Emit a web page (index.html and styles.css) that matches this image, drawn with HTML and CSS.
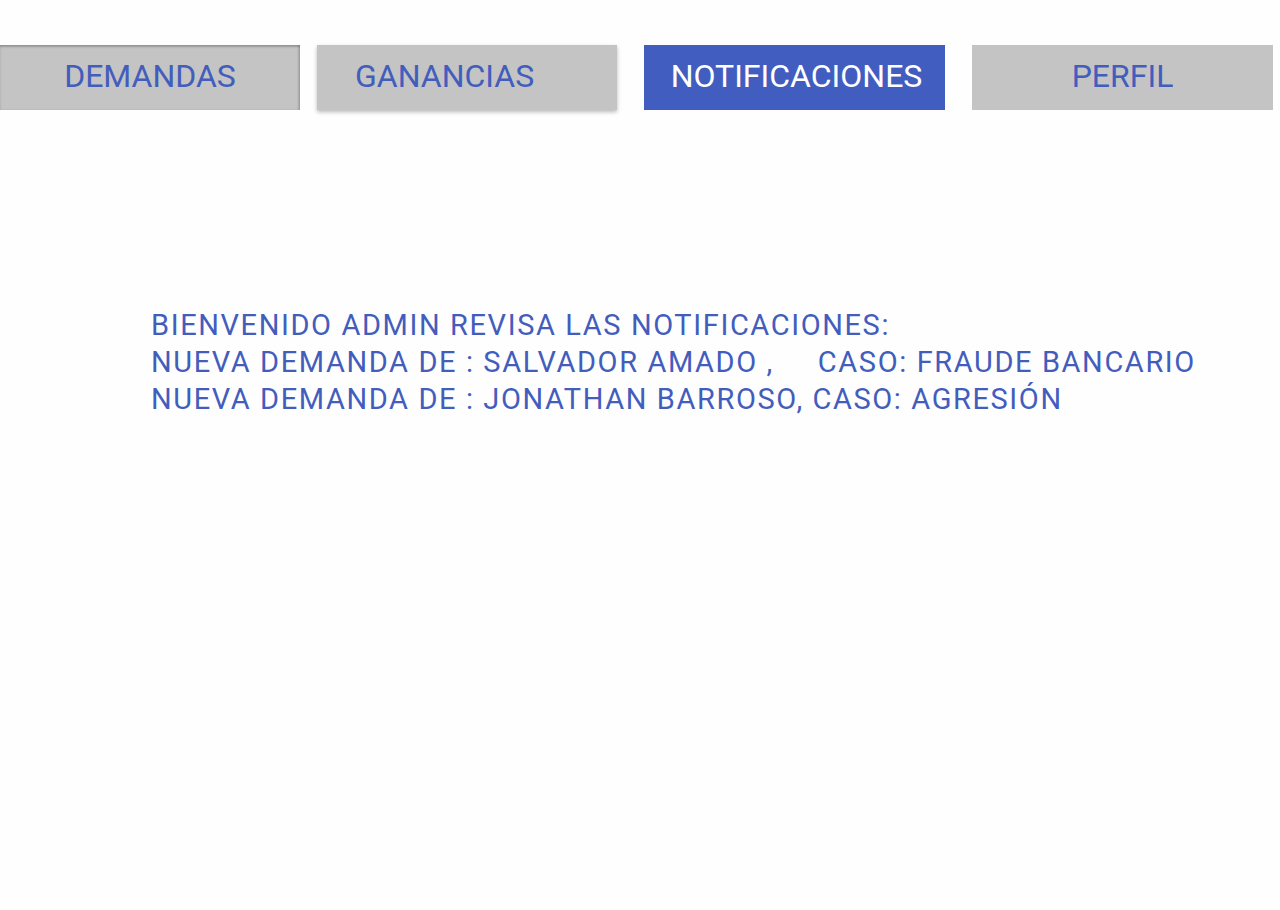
FILE: index.html
```html
<!DOCTYPE html>
<html lang="es">
<head>
<meta charset="utf-8">
<title>Notificaciones</title>
<link rel="stylesheet" href="styles.css">
</head>
<body>
<nav class="tabs">
  <a class="tab tab-demandas">DEMANDAS</a>
  <a class="tab tab-ganancias">GANANCIAS</a>
  <a class="tab tab-active">NOTIFICACIONES</a>
  <a class="tab tab-perfil">PERFIL</a>
</nav>
<main class="content">
  <p class="line">BIENVENIDO ADMIN REVISA LAS NOTIFICACIONES:</p>
  <p class="line">NUEVA DEMANDA DE : SALVADOR AMADO ,     CASO: FRAUDE BANCARIO</p>
  <p class="line">NUEVA DEMANDA DE : JONATHAN BARROSO, CASO: AGRESIÓN</p>
</main>
</body>
</html>
```
FILE: styles.css
```css
html, body {
  margin: 0;
  padding: 0;
  background: #fefefe;
  font-family: Roboto, "Liberation Sans", sans-serif;
}

.tabs {
  display: flex;
  padding-top: 45px;
}

.tab {
  box-sizing: border-box;
  width: 300px;
  height: 65px;
  padding-bottom: 3px;
  background: #c4c4c4;
  color: #435dbd;
  font-size: 32px;
  display: flex;
  align-items: center;
  justify-content: center;
  text-decoration: none;
}

.tab-demandas {
  box-shadow: inset 0 2px 2px rgba(0, 0, 0, 0.22), inset -2px 0 2px rgba(0, 0, 0, 0.14);
}

.tab-ganancias {
  margin-left: 17px;
  justify-content: flex-start;
  padding-left: 38px;
  box-shadow: 0 2px 4px rgba(0, 0, 0, 0.28);
}

.tab-active {
  margin-left: 27px;
  width: 301px;
  padding-left: 4px;
  background: #415dbf;
  color: #ffffff;
}

.tab-perfil {
  margin-left: 27px;
  width: 301px;
}

.content {
  margin-top: 197px;
  padding-left: 151px;
}

.line {
  margin: 0;
  font-size: 29px;
  letter-spacing: 1.6px;
  line-height: 37px;
  color: #435dbd;
  white-space: pre;
}
```
